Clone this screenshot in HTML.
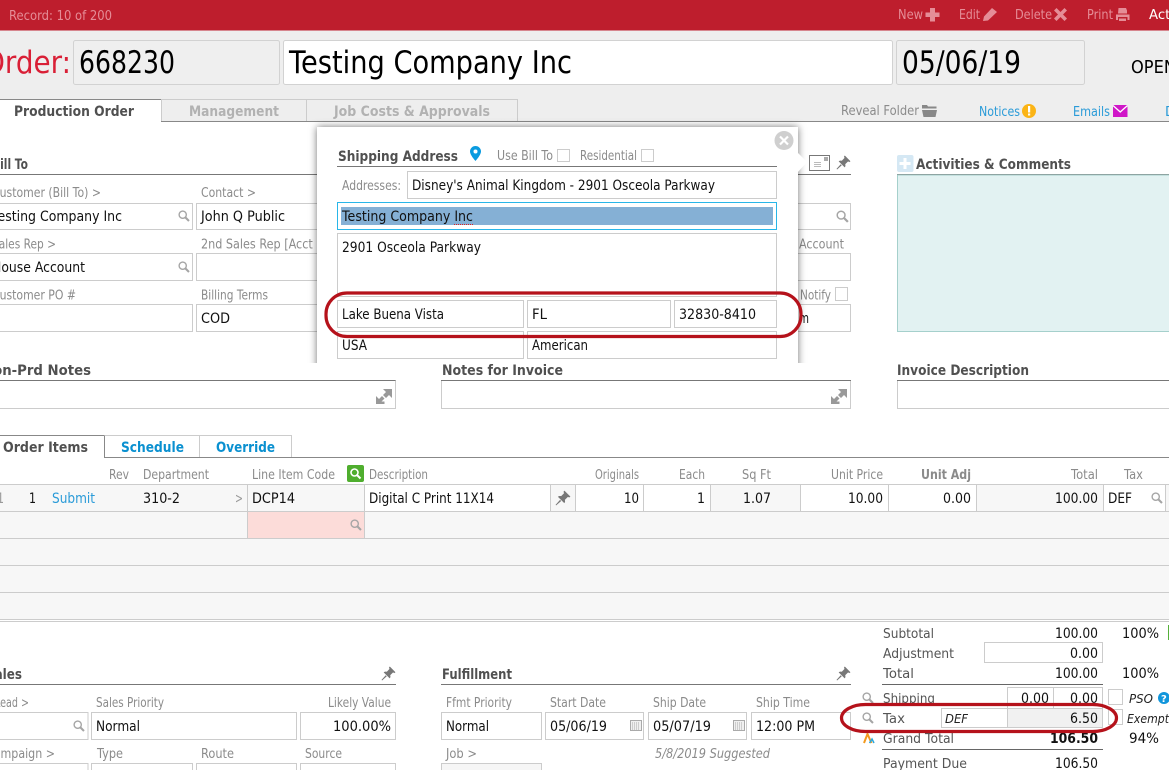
<!DOCTYPE html>
<html><head><meta charset="utf-8"><title>Order</title>
<style>
html,body{margin:0;padding:0;background:#fff;width:1169px;height:770px;overflow:hidden}
svg{display:block}
text{font-family:"DejaVu Sans","Liberation Sans",sans-serif;font-size:13.9px;fill:#111;white-space:pre}
.l{font-size:12.9px;fill:#8b8b8b}
.b{font-weight:bold;font-size:14.3px;fill:#505050}
.h{font-size:31px;fill:#000}
.t{font-size:13.3px;fill:#555}
.bl{fill:#2a9bd8;font-size:13.200px}
.i{font-style:italic;font-size:12.8px;fill:#222}
.f{fill:#fff;stroke:#ccc;stroke-width:1}
.g{fill:#f7f7f7;stroke:#ccc;stroke-width:1}
.top{font-size:12.9px;fill:#e58d97}
</style></head><body>
<svg width="1169" height="770" viewBox="0 0 1169 770" xmlns="http://www.w3.org/2000/svg">
<defs>
<symbol id="s" viewBox="0 0 14 14" overflow="visible"><circle cx="5.500" cy="5.500" r="4.200" fill="none" stroke="#a5a5a5" stroke-width="1.600"/><path d="M8.600 8.600L12.800 12.800" stroke="#a5a5a5" stroke-width="2.400"/></symbol>
<symbol id="p" viewBox="0 0 14 14" overflow="visible"><path d="M8.200 .5L13.500 5.800L12.400 6.600L11.300 6L8.600 8.600C9 10 8.800 10.800 8.100 11.500L2.500 5.900C3.300 5.200 4.100 5 5.400 5.400L8 2.700L7.400 1.600Z M4.400 8.600L5.400 9.600L1 13.500L.5 13Z" fill="#777"/></symbol>
<symbol id="c" viewBox="0 0 12 11" overflow="visible"><rect x=".5" y=".5" width="11" height="10" fill="#f0f0f0" stroke="#aaa"/><path d="M2 3h8M2 5h8M2 7h8M2 9h8" stroke="#aaa" stroke-dasharray="1 1"/></symbol>
<filter id="sh" x="-5%" y="-5%" width="110%" height="110%"><feDropShadow dx="0" dy="0" stdDeviation="4" flood-color="#000" flood-opacity=".55"/></filter>
<clipPath id="mc"><rect x="290" y="100" width="540" height="263"/></clipPath>
</defs>

<!-- header -->
<rect x="0" y="0" width="1169" height="121" fill="#eeeeee"/>
<rect x="0" y="0" width="1169" height="30.500" fill="#be1e2d"/>
<text x="9" y="20" class="top" textLength="103" lengthAdjust="spacingAndGlyphs">Record: 10 of 200</text>
<text x="898" y="19" class="top" textLength="25" lengthAdjust="spacingAndGlyphs">New</text>
<path d="M930 8h5v4.500h4.500v4.500h-4.500v4.500h-5v-4.500h-4.500v-4.500h4.500z" fill="#e58d97"/>
<text x="959" y="19" class="top" textLength="21" lengthAdjust="spacingAndGlyphs">Edit</text>
<path d="M983 21l1-4.500 8-8.500 5 4-9 8.500z" fill="#e58d97"/>
<text x="1015" y="19" class="top" textLength="37" lengthAdjust="spacingAndGlyphs">Delete</text>
<path d="M1054 10.500l2.500-2.500 4 4 4-4 2.500 2.500-4 4 4 4-2.500 2.500-4-4-4 4-2.500-2.500 4-4z" fill="#e58d97"/>
<text x="1087" y="19" class="top" textLength="26" lengthAdjust="spacingAndGlyphs">Print</text>
<path d="M1118.500 8h7.500l1 2.500v3h-9zM1116 14.500h13.500v5.500h-2v-3h-9.500v3h-2zM1119 18.500h7v2.500h-7z" fill="#e58d97"/>
<text x="1149" y="19" style="font-size:13px;fill:#fff" textLength="25" lengthAdjust="spacingAndGlyphs">Acti</text>

<text x="-17" y="73" style="font-size:31px;fill:#d91f36" textLength="88" lengthAdjust="spacingAndGlyphs">Order:</text>
<rect x="73.500" y="40.500" width="206" height="44" rx="2" fill="#efefef" stroke="#d2d2d2"/>
<rect x="283.500" y="40.500" width="609" height="44" rx="2" fill="#fff" stroke="#d2d2d2"/>
<rect x="896.500" y="40.500" width="188" height="44" rx="2" fill="#efefef" stroke="#d2d2d2"/>
<text x="79" y="73" class="h" textLength="96" lengthAdjust="spacingAndGlyphs">668230</text>
<text x="289" y="73" class="h" textLength="283" lengthAdjust="spacingAndGlyphs">Testing Company Inc</text>
<text x="902" y="73" class="h" textLength="119" lengthAdjust="spacingAndGlyphs">05/06/19</text>
<text x="1131" y="73" style="font-size:18px;fill:#000" textLength="45" lengthAdjust="spacingAndGlyphs">OPEN</text>

<!-- main tabs -->
<rect x="0" y="122" width="1169" height="648" fill="#fff"/>
<path d="M0 121.500H1169" stroke="#888"/>
<rect x="-2" y="99.500" width="163.500" height="23" fill="#fff"/>
<path d="M-2 99.500H161.500V122" fill="none" stroke="#888"/>
<path d="M161.500 121V99.500H306.500V121M306.500 99.500H517.500V121" fill="#eee" stroke="#ccc"/>
<text x="14" y="116" class="b" textLength="120" lengthAdjust="spacingAndGlyphs">Production Order</text>
<text x="189" y="116" class="b" style="fill:#b2b2b2" textLength="90" lengthAdjust="spacingAndGlyphs">Management</text>
<text x="334" y="116" class="b" style="fill:#b2b2b2" textLength="156" lengthAdjust="spacingAndGlyphs">Job Costs &amp; Approvals</text>
<text x="841" y="115" class="l" textLength="78" lengthAdjust="spacingAndGlyphs">Reveal Folder</text>
<path d="M922 105h5l1 1.500h8.500v2h-14.500zM922 110h15l-1.500 7h-12z" fill="#888"/>
<text x="979" y="116" class="bl" textLength="41" lengthAdjust="spacingAndGlyphs">Notices</text>
<circle cx="1029" cy="111" r="7" fill="#fbb416"/><rect x="1028" y="106" width="2.200" height="6.500" fill="#fff"/><rect x="1028" y="113.500" width="2.200" height="2" fill="#fff"/>
<text x="1073" y="116" class="bl" textLength="37" lengthAdjust="spacingAndGlyphs">Emails</text>
<rect x="1113" y="105" width="14.500" height="12" fill="#d016c8"/><path d="M1113 105.500l7.250 6.500 7.250-6.500" fill="none" stroke="#fff" stroke-width="1.300"/>
<text x="1165" y="116" class="bl">D</text>

<!-- bill to -->
<text x="-8" y="169" class="b" textLength="36" lengthAdjust="spacingAndGlyphs">Bill To</text>
<path d="M0 174.500H851" stroke="#777"/>
<text x="-8" y="197" class="l" textLength="109" lengthAdjust="spacingAndGlyphs">Customer (Bill To) &gt;</text>
<text x="201" y="197" class="l" textLength="55" lengthAdjust="spacingAndGlyphs">Contact &gt;</text>
<rect class="f" x="-3" y="203.500" width="195.500" height="26"/><rect class="f" x="196.500" y="203.500" width="200" height="26"/>
<text x="-8" y="221" textLength="130" lengthAdjust="spacingAndGlyphs">Testing Company Inc</text>
<text x="201" y="221" textLength="84" lengthAdjust="spacingAndGlyphs">John Q Public</text>
<use href="#s" x="178" y="210" width="12" height="12"/>
<text x="-8" y="248.500" class="l" textLength="64" lengthAdjust="spacingAndGlyphs">Sales Rep &gt;</text>
<text x="201" y="248.500" class="l" textLength="125" lengthAdjust="spacingAndGlyphs">2nd Sales Rep [Acct M</text>
<rect class="f" x="-3" y="253.500" width="195.500" height="27"/><rect class="f" x="196.500" y="253.500" width="200" height="27"/>
<text x="-8" y="272" textLength="93" lengthAdjust="spacingAndGlyphs">House Account</text>
<use href="#s" x="178" y="261" width="12" height="12"/>
<text x="-8" y="299.500" class="l" textLength="84" lengthAdjust="spacingAndGlyphs">Customer PO #</text>
<text x="201" y="299.500" class="l" textLength="67" lengthAdjust="spacingAndGlyphs">Billing Terms</text>
<rect class="f" x="-3" y="304.500" width="195.500" height="27"/><rect class="f" x="196.500" y="304.500" width="200" height="27"/>
<text x="201" y="323" textLength="29" lengthAdjust="spacingAndGlyphs">COD</text>

<!-- right of modal -->
<rect class="f" x="760" y="203.500" width="90.500" height="26"/><use href="#s" x="836" y="210" width="13" height="13"/>
<text x="799" y="248.500" class="l" textLength="45" lengthAdjust="spacingAndGlyphs">Account</text>
<rect class="f" x="760" y="253.500" width="90.500" height="27"/>
<text x="800" y="299.500" class="l" textLength="31" lengthAdjust="spacingAndGlyphs">Notify</text>
<rect class="f" x="835.500" y="287.500" width="12" height="13"/>
<rect class="f" x="760" y="304.500" width="90.500" height="27"/>
<text x="799" y="323" textLength="10" lengthAdjust="spacingAndGlyphs">m</text>
<rect x="809.500" y="155.500" width="20" height="15" fill="#fff" stroke="#777"/><path d="M814 162.500h7M814 164.500h7M814 166.500h7" stroke="#bbb"/><rect x="824" y="157" width="4" height="4" fill="#aaa"/>
<use href="#p" x="836" y="155" width="15" height="15"/>

<!-- activities -->
<rect x="897" y="155" width="16.500" height="17" rx="2" fill="#d5e8f4"/><path d="M905 158v11M899.500 163.500h11" stroke="#fff" stroke-width="3"/>
<text x="916" y="169" class="b" textLength="155" lengthAdjust="spacingAndGlyphs">Activities &amp; Comments</text>
<path d="M897 174.500H1169" stroke="#777"/>
<rect x="897.500" y="175" width="275" height="156.500" fill="#e2f2f2" stroke="#a5d0cc"/>

<!-- notes -->
<text x="-18" y="375" class="b" textLength="109" lengthAdjust="spacingAndGlyphs">Non-Prd Notes</text>
<rect class="f" x="-3" y="380.500" width="398.500" height="28"/><path d="M-3 380.500H395.500" stroke="#777"/>
<path d="M383 389h9v9l-3-3-3 3-3-3 3-3zM376 396l3 3 3-3 2.500 2.500-3 3 3 0v2.500h-8.500z" fill="#999"/>
<text x="442" y="375" class="b" textLength="121" lengthAdjust="spacingAndGlyphs">Notes for Invoice</text>
<rect class="f" x="441.500" y="380.500" width="409" height="28"/><path d="M441 380.500H851" stroke="#777"/>
<path d="M838 389h9v9l-3-3-3 3-3-3 3-3zM831 396l3 3 3-3 2.500 2.500-3 3 3 0v2.500h-8.500z" fill="#999"/>
<text x="897" y="375" class="b" textLength="132" lengthAdjust="spacingAndGlyphs">Invoice Description</text>
<rect class="f" x="897.500" y="380.500" width="275" height="28"/><path d="M897 380.500H1169" stroke="#777"/>

<!-- modal -->
<g clip-path="url(#mc)"><rect x="317" y="127" width="481" height="260" fill="#fff" filter="url(#sh)"/></g>
<path d="M797 152l10 10-10 11z" fill="#fff"/>
<circle cx="784" cy="140.500" r="9.500" fill="#cfcfcf"/><path d="M780 136.500l8 8M788 136.500l-8 8" stroke="#fff" stroke-width="2.200"/>
<text x="338" y="161" class="b" textLength="120" lengthAdjust="spacingAndGlyphs">Shipping Address</text>
<path d="M475.500 146a5.500 5.500 0 0 1 5.500 5.500c0 3.500-5.500 9.500-5.500 9.500s-5.500-6-5.500-9.500a5.500 5.500 0 0 1 5.500-5.500z" fill="#0a9be0"/><circle cx="475.500" cy="151.500" r="2" fill="#fff"/>
<text x="497" y="160" class="l" textLength="56" lengthAdjust="spacingAndGlyphs">Use Bill To</text>
<rect class="f" x="557.500" y="149.500" width="12" height="12"/>
<text x="580" y="160" class="l" textLength="57" lengthAdjust="spacingAndGlyphs">Residential</text>
<rect class="f" x="641.500" y="149.500" width="12" height="12"/>
<path d="M337 166.500H777" stroke="#777"/>
<text x="342" y="190" class="l" textLength="59" lengthAdjust="spacingAndGlyphs">Addresses:</text>
<rect class="f" x="407.500" y="171.500" width="369" height="27"/>
<text x="412" y="190" textLength="303" lengthAdjust="spacingAndGlyphs">Disney's Animal Kingdom - 2901 Osceola Parkway</text>
<rect x="337.500" y="202.500" width="439" height="27" fill="#fff" stroke="#29b6e8"/>
<rect x="341" y="207" width="432" height="18" fill="#85b0d5"/>
<text x="342" y="221" textLength="131" lengthAdjust="spacingAndGlyphs">Testing Company Inc</text>
<path d="M454 224.500H473" stroke="#d22" stroke-dasharray="1 1"/>
<rect class="f" x="337.500" y="233.500" width="439" height="63"/>
<text x="342" y="252" textLength="139" lengthAdjust="spacingAndGlyphs">2901 Osceola Parkway</text>
<rect class="f" x="337.500" y="300.500" width="186" height="27"/>
<rect class="f" x="527.500" y="300.500" width="143" height="27"/>
<rect class="f" x="674.500" y="300.500" width="102" height="27"/>
<text x="342" y="319" textLength="102" lengthAdjust="spacingAndGlyphs">Lake Buena Vista</text>
<text x="532" y="319" textLength="15" lengthAdjust="spacingAndGlyphs">FL</text>
<text x="679" y="319" textLength="77" lengthAdjust="spacingAndGlyphs">32830-8410</text>
<rect class="f" x="337.500" y="331.500" width="186" height="27"/>
<rect class="f" x="527.500" y="331.500" width="249" height="27"/>
<text x="342" y="350" textLength="25" lengthAdjust="spacingAndGlyphs">USA</text>
<text x="532" y="350" textLength="56" lengthAdjust="spacingAndGlyphs">American</text>
<rect x="326" y="293" width="475" height="43.500" rx="21" fill="none" stroke="#b5121b" stroke-width="3.200"/>

<!-- order item tabs -->
<path d="M0 457.500H1169" stroke="#888"/>
<rect x="-2" y="435.500" width="106.500" height="23" fill="#fff"/>
<path d="M-2 435.500H104.500V458" fill="none" stroke="#888"/>
<path d="M104.500 435.500H199.500V457M199.500 435.500H291.500V457" fill="#fff" stroke="#ccc"/>
<text x="3" y="452" class="b" textLength="85" lengthAdjust="spacingAndGlyphs">Order Items</text>
<text x="121" y="452" class="b" style="fill:#0a90d0" textLength="63" lengthAdjust="spacingAndGlyphs">Schedule</text>
<text x="216" y="452" class="b" style="fill:#0a90d0" textLength="59" lengthAdjust="spacingAndGlyphs">Override</text>

<text x="109" y="479" class="l" textLength="20" lengthAdjust="spacingAndGlyphs">Rev</text>
<text x="143" y="479" class="l" textLength="66" lengthAdjust="spacingAndGlyphs">Department</text>
<text x="252" y="479" class="l" textLength="83" lengthAdjust="spacingAndGlyphs">Line Item Code</text>
<rect x="347" y="465" width="17" height="17" rx="2" fill="#4fae2e"/>
<circle cx="354.500" cy="472.500" r="3.500" fill="none" stroke="#fff" stroke-width="1.600"/><path d="M357 475l3.500 3.500" stroke="#fff" stroke-width="2"/>
<text x="369" y="479" class="l" textLength="59" lengthAdjust="spacingAndGlyphs">Description</text>
<text x="595" y="479" class="l" textLength="44" lengthAdjust="spacingAndGlyphs">Originals</text>
<text x="679" y="479" class="l" textLength="26" lengthAdjust="spacingAndGlyphs">Each</text>
<text x="742" y="479" class="l" textLength="29" lengthAdjust="spacingAndGlyphs">Sq Ft</text>
<text x="831" y="479" class="l" textLength="52" lengthAdjust="spacingAndGlyphs">Unit Price</text>
<text x="921" y="479" class="l" style="font-weight:bold" textLength="50" lengthAdjust="spacingAndGlyphs">Unit Adj</text>
<text x="1071" y="479" class="l" textLength="27" lengthAdjust="spacingAndGlyphs">Total</text>
<text x="1124" y="479" class="l" textLength="19" lengthAdjust="spacingAndGlyphs">Tax</text>

<!-- grid -->
<rect x="0" y="485" width="1169" height="134" fill="#f7f7f7"/>
<path d="M0 484.500H1169M0 511.500H1169M0 538.500H1169M0 565.500H1169M0 592.500H1169M0 619.500H1169M0 621.500H1169" stroke="#ccc"/>
<rect x="365" y="485" width="186" height="26" fill="#fff"/>
<rect x="576" y="485" width="134" height="26" fill="#fff"/>
<rect x="801" y="485" width="175" height="26" fill="#fff"/>
<rect x="1104" y="485" width="62" height="26" fill="#fff"/>
<rect x="248" y="485" width="116" height="26" fill="#f7f7f7"/>
<rect x="248" y="512" width="116" height="26" fill="#fcdcd9"/>
<path d="M247.500 485V538M364.500 485V538M550.500 485V511M575.500 485V511M643.500 485V511M710.500 485V511M800.500 485V511M888.500 485V511M976.500 485V511M1103.500 485V511M1165.500 485V511" stroke="#ccc"/>
<text x="-3" y="503" style="fill:#999" textLength="7" lengthAdjust="spacingAndGlyphs">1</text>
<text x="29" y="503" textLength="7" lengthAdjust="spacingAndGlyphs">1</text>
<text x="52" y="503" style="fill:#2a9bd8" textLength="43" lengthAdjust="spacingAndGlyphs">Submit</text>
<text x="143" y="503" textLength="37" lengthAdjust="spacingAndGlyphs">310-2</text>
<text x="235" y="503" style="fill:#999" textLength="8" lengthAdjust="spacingAndGlyphs">&gt;</text>
<text x="252" y="503" textLength="43" lengthAdjust="spacingAndGlyphs">DCP14</text>
<text x="369" y="503" textLength="125" lengthAdjust="spacingAndGlyphs">Digital C Print 11X14</text>
<use href="#p" x="555" y="490" width="16" height="16"/>
<text x="624" y="503" textLength="15" lengthAdjust="spacingAndGlyphs">10</text>
<text x="697" y="503" textLength="8" lengthAdjust="spacingAndGlyphs">1</text>
<text x="743" y="503" textLength="28" lengthAdjust="spacingAndGlyphs">1.07</text>
<text x="848" y="503" textLength="35" lengthAdjust="spacingAndGlyphs">10.00</text>
<text x="943" y="503" textLength="28" lengthAdjust="spacingAndGlyphs">0.00</text>
<text x="1055" y="503" textLength="43" lengthAdjust="spacingAndGlyphs">100.00</text>
<text x="1108" y="503" textLength="24" lengthAdjust="spacingAndGlyphs">DEF</text>
<use href="#s" x="1151" y="492" width="12" height="12"/>
<use href="#s" x="350" y="519" width="12" height="12"/>

<!-- sales -->
<text x="-14" y="679" class="b" textLength="36" lengthAdjust="spacingAndGlyphs">Sales</text>
<path d="M0 684.500H396" stroke="#777"/>
<use href="#p" x="381" y="666" width="15" height="15"/>
<text x="-5" y="707" class="l" textLength="34" lengthAdjust="spacingAndGlyphs">Lead &gt;</text>
<text x="96" y="707" class="l" textLength="68" lengthAdjust="spacingAndGlyphs">Sales Priority</text>
<text x="328" y="707" class="l" textLength="63" lengthAdjust="spacingAndGlyphs">Likely Value</text>
<rect class="f" x="-3" y="712.500" width="91" height="27"/>
<rect class="f" x="91.500" y="712.500" width="205" height="27"/>
<rect class="f" x="300.500" y="712.500" width="95" height="27"/>
<use href="#s" x="73" y="720" width="12" height="12"/>
<text x="96" y="731" textLength="44" lengthAdjust="spacingAndGlyphs">Normal</text>
<text x="333" y="731" textLength="58" lengthAdjust="spacingAndGlyphs">100.00%</text>
<text x="-14" y="758" class="l" textLength="69" lengthAdjust="spacingAndGlyphs">Campaign &gt;</text>
<text x="97" y="758" class="l" textLength="26" lengthAdjust="spacingAndGlyphs">Type</text>
<text x="201" y="758" class="l" textLength="33" lengthAdjust="spacingAndGlyphs">Route</text>
<text x="305" y="758" class="l" textLength="37" lengthAdjust="spacingAndGlyphs">Source</text>
<rect class="f" x="-3" y="763.500" width="91" height="20"/>
<rect class="f" x="91.500" y="763.500" width="101" height="20"/>
<rect class="f" x="196.500" y="763.500" width="100" height="20"/>
<rect class="f" x="300.500" y="763.500" width="95" height="20"/>

<!-- fulfillment -->
<text x="442" y="679" class="b" textLength="70" lengthAdjust="spacingAndGlyphs">Fulfillment</text>
<path d="M441 684.500H851" stroke="#777"/>
<use href="#p" x="836" y="666" width="15" height="15"/>
<text x="446" y="707" class="l" textLength="66" lengthAdjust="spacingAndGlyphs">Ffmt Priority</text>
<text x="550" y="707" class="l" textLength="56" lengthAdjust="spacingAndGlyphs">Start Date</text>
<text x="653" y="707" class="l" textLength="53" lengthAdjust="spacingAndGlyphs">Ship Date</text>
<text x="756" y="707" class="l" textLength="54" lengthAdjust="spacingAndGlyphs">Ship Time</text>
<rect class="f" x="441.500" y="712.500" width="100" height="27"/>
<rect class="f" x="545.500" y="712.500" width="98" height="27"/>
<rect class="f" x="648.500" y="712.500" width="98" height="27"/>
<rect class="f" x="751.500" y="712.500" width="99" height="27"/>
<text x="446" y="731" textLength="43" lengthAdjust="spacingAndGlyphs">Normal</text>
<text x="550" y="731" textLength="57" lengthAdjust="spacingAndGlyphs">05/06/19</text>
<text x="653" y="731" textLength="58" lengthAdjust="spacingAndGlyphs">05/07/19</text>
<text x="756" y="731" textLength="59" lengthAdjust="spacingAndGlyphs">12:00 PM</text>
<use href="#c" x="630" y="720" width="12" height="11"/>
<use href="#c" x="733" y="720" width="12" height="11"/>
<text x="446" y="758" class="l" textLength="31" lengthAdjust="spacingAndGlyphs">Job &gt;</text>
<text x="655" y="758" class="l" style="font-style:italic" textLength="115" lengthAdjust="spacingAndGlyphs">5/8/2019 Suggested</text>
<rect x="441.500" y="763.500" width="100" height="20" fill="#f6f6f6" stroke="#ccc"/>

<!-- totals -->
<text x="883" y="638" class="t" textLength="51" lengthAdjust="spacingAndGlyphs">Subtotal</text>
<text x="1055" y="638" textLength="43" lengthAdjust="spacingAndGlyphs">100.00</text>
<text x="1122" y="638" textLength="37" lengthAdjust="spacingAndGlyphs">100%</text>
<rect x="1168" y="625" width="1" height="15" fill="#55b03a"/>
<text x="883" y="658" class="t" textLength="71" lengthAdjust="spacingAndGlyphs">Adjustment</text>
<rect class="f" x="984.500" y="642.500" width="118" height="20"/>
<text x="1070" y="658" textLength="28" lengthAdjust="spacingAndGlyphs">0.00</text>
<text x="883" y="678" class="t" textLength="31" lengthAdjust="spacingAndGlyphs">Total</text>
<text x="1055" y="678" textLength="43" lengthAdjust="spacingAndGlyphs">100.00</text>
<text x="1122" y="678" textLength="37" lengthAdjust="spacingAndGlyphs">100%</text>
<path d="M882 684.500H1103" stroke="#666"/>
<use href="#s" x="862" y="692" width="12" height="12"/>
<text x="883" y="703" class="t" textLength="52" lengthAdjust="spacingAndGlyphs">Shipping</text>
<rect class="f" x="1007.500" y="687.500" width="46" height="21"/>
<rect class="f" x="1053.500" y="687.500" width="49" height="21"/>
<text x="1021" y="703" textLength="28" lengthAdjust="spacingAndGlyphs">0.00</text>
<text x="1070" y="703" textLength="28" lengthAdjust="spacingAndGlyphs">0.00</text>
<rect class="f" x="1108.500" y="689.500" width="14" height="15"/>
<text x="1129" y="703" class="i" textLength="24" lengthAdjust="spacingAndGlyphs">PSO</text>
<circle cx="1164" cy="698" r="6" fill="#1196dc"/>
<text x="1161" y="702" style="font-size:10px;font-weight:bold;fill:#fff">?</text>
<use href="#s" x="862" y="712" width="12" height="12"/>
<text x="883" y="723" class="t" textLength="22" lengthAdjust="spacingAndGlyphs">Tax</text>
<rect x="941.500" y="708.500" width="66" height="19" fill="#fff" stroke="#ccc"/>
<rect x="1007.500" y="708.500" width="95" height="19" fill="#f1f1f1" stroke="#ccc"/>
<text x="945" y="723" class="i" textLength="23" lengthAdjust="spacingAndGlyphs">DEF</text>
<text x="1070" y="723" textLength="28" lengthAdjust="spacingAndGlyphs">6.50</text>
<rect class="f" x="1108.500" y="709.500" width="14" height="15"/>
<text x="1127" y="723" class="i" textLength="42" lengthAdjust="spacingAndGlyphs">Exempt</text>
<path d="M864 743l3.500-9 4 9" fill="none" stroke="#f39a1e" stroke-width="2"/><path d="M869.500 743l2.500-4 2 4" fill="none" stroke="#2aa6dc" stroke-width="1.500"/>
<text x="883" y="743" class="t" textLength="71" lengthAdjust="spacingAndGlyphs">Grand Total</text>
<text x="1050" y="743" style="font-weight:bold;fill:#111" textLength="48" lengthAdjust="spacingAndGlyphs">106.50</text>
<text x="1129" y="743" textLength="30" lengthAdjust="spacingAndGlyphs">94%</text>
<path d="M882 749.500H1103" stroke="#666"/>
<text x="883" y="768" class="t" textLength="84" lengthAdjust="spacingAndGlyphs">Payment Due</text>
<text x="1055" y="768" textLength="43" lengthAdjust="spacingAndGlyphs">106.50</text>
<rect x="841.500" y="704.500" width="275" height="27" rx="24" ry="13.500" fill="none" stroke="#b5121b" stroke-width="3.200"/>
</svg>
</body></html>
